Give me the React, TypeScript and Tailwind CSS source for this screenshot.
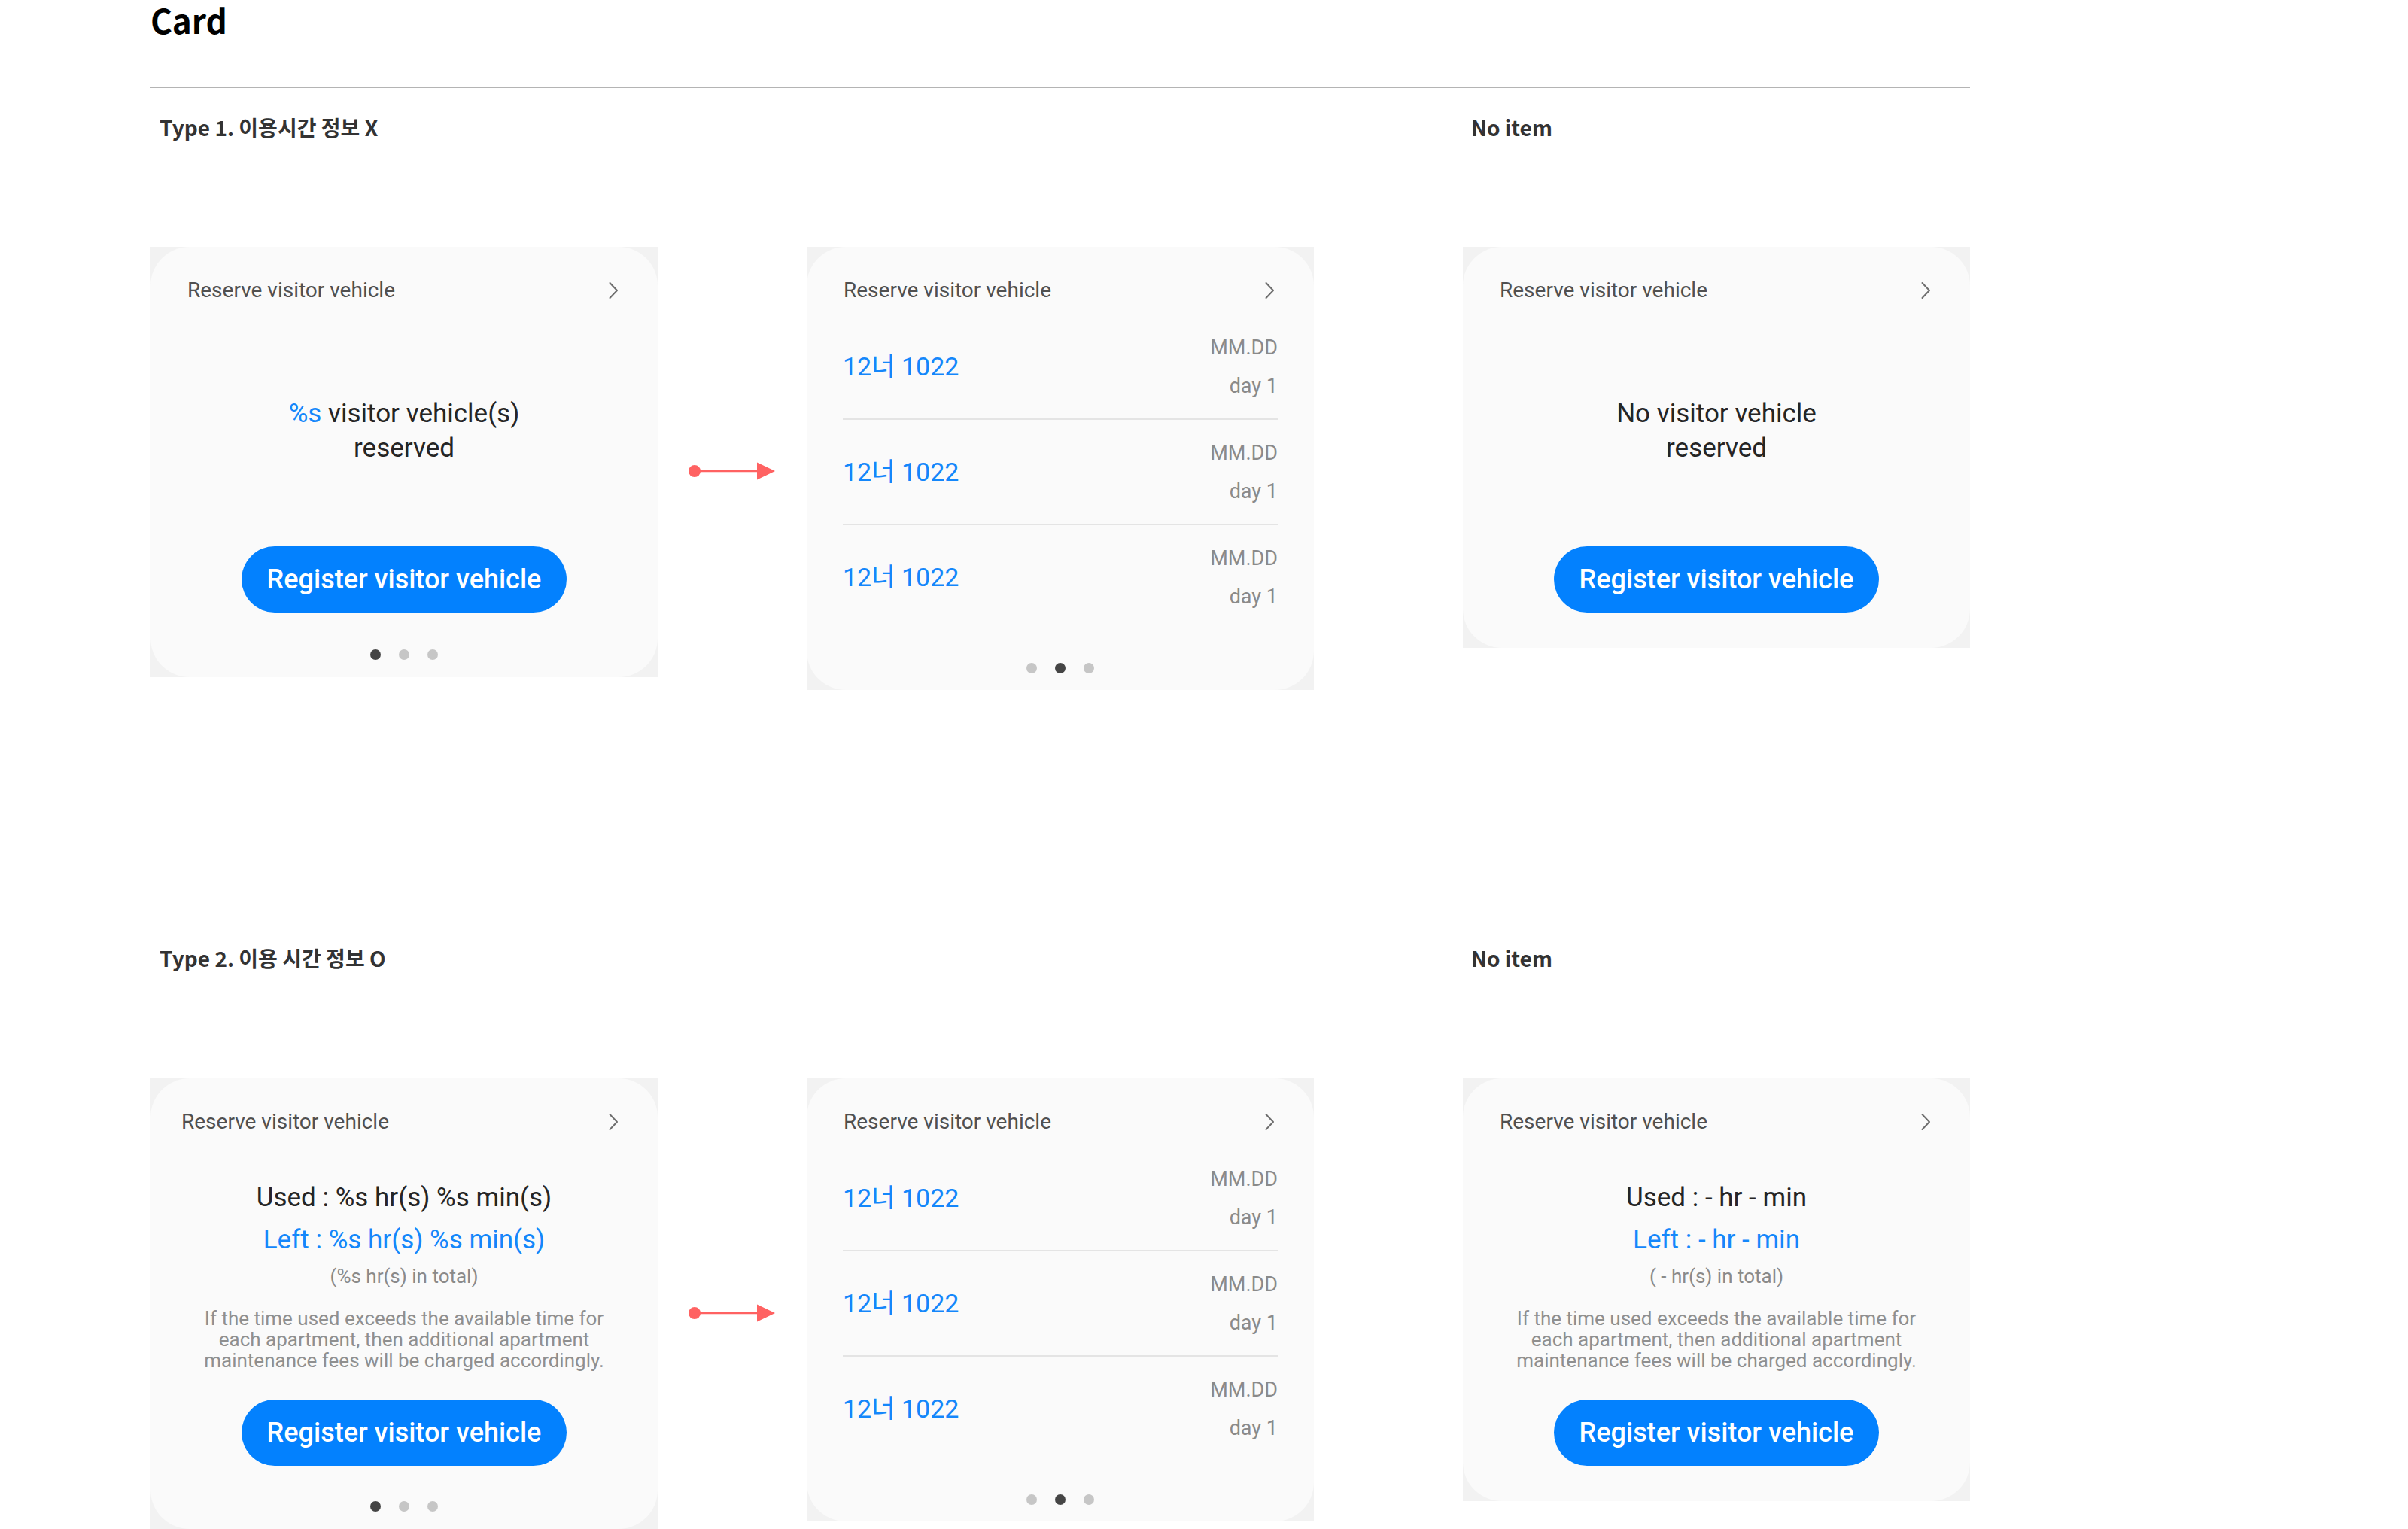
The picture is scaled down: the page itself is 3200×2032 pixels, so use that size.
import React from 'react';

const COLS = 'grid grid-cols-[674px_198px_674px_198px_674px] items-start';

const Chevron: React.FC = () => (
  <svg width="14" height="24" viewBox="0 0 14 24" fill="none">
    <path d="M2.5 2l9.5 10-9.5 10" stroke="#6e6e6e" strokeWidth="2" strokeLinecap="round" strokeLinejoin="round" />
  </svg>
);

const Arrow: React.FC = () => (
  <svg width="116" height="24" viewBox="0 0 116 24">
    <circle cx="8" cy="12" r="8" fill="#ff6262" />
    <line x1="12" y1="12" x2="93" y2="12" stroke="#ff6262" strokeWidth="2.5" />
    <polygon points="91,0.5 115,12 91,23.5" fill="#ff6262" />
  </svg>
);

const Dots: React.FC<{ active: number; className: string }> = ({ active, className }) => (
  <div className={`flex justify-center gap-[24px] ${className}`}>
    {[0, 1, 2].map((i) => (
      <span key={i} className={`w-[14px] h-[14px] rounded-full ${i === active ? 'bg-[#454545]' : 'bg-[#c6c6c6]'}`} />
    ))}
  </div>
);

const CardShell: React.FC<{ children: React.ReactNode }> = ({ children }) => (
  <div className="w-[674px] shrink-0 bg-[#f2f2f2]">
    <div className="flex flex-col rounded-[52px] bg-[#fafafa] font-['Roboto','Noto_Sans_CJK_KR',sans-serif]">
      {children}
    </div>
  </div>
);

const Header: React.FC<{ pl?: string }> = ({ pl = 'pl-[49px]' }) => (
  <div className={`mt-[41px] flex h-[33px] items-center justify-between pr-[52px] ${pl}`}>
    <span className="text-[28px] leading-[33px] text-[#505050]">Reserve visitor vehicle</span>
    <Chevron />
  </div>
);

const RegisterButton: React.FC<{ className: string }> = ({ className }) => (
  <button className={`self-center w-[432px] h-[88px] rounded-full bg-[#0381fe] text-[36px] font-medium text-white ${className}`}>
    Register visitor vehicle
  </button>
);

const SummaryCard: React.FC = () => (
  <CardShell>
    <Header />
    <p className="mt-[125px] text-center text-[35px] leading-[46px] text-[#252525]">
      <span className="text-[#1487fb]">%s</span> visitor vehicle(s)
      <br />
      reserved
    </p>
    <RegisterButton className="mt-[107px]" />
    <Dots active={0} className="mt-[49px] mb-[23px]" />
  </CardShell>
);

const EmptyCard: React.FC = () => (
  <CardShell>
    <Header />
    <p className="mt-[125px] text-center text-[35px] leading-[46px] text-[#252525]">
      No visitor vehicle
      <br />
      reserved
    </p>
    <RegisterButton className="mt-[107px] mb-[47px]" />
  </CardShell>
);

const VehicleRow: React.FC = () => (
  <div className="flex h-[138px] items-center justify-between">
    <span className="text-[34px] leading-[40px] text-[#1487fb]">12너 1022</span>
    <div className="flex flex-col items-end gap-[19px] text-[27px] leading-[32px] text-[#8a8a8a]">
      <span>MM.DD</span>
      <span>day 1</span>
    </div>
  </div>
);

const ListCard: React.FC = () => (
  <CardShell>
    <Header />
    <div className="mt-[16px] flex flex-col px-[48px]">
      <VehicleRow />
      <div className="h-[2px] bg-[#e4e4e4]" />
      <VehicleRow />
      <div className="h-[2px] bg-[#e4e4e4]" />
      <VehicleRow />
    </div>
    <Dots active={1} className="mt-[45px] mb-[22px]" />
  </CardShell>
);

const TimeInfo: React.FC<{ used: string; left: string; total: string }> = ({ used, left, total }) => (
  <div className="flex flex-col items-center text-center">
    <p className="mt-[63px] text-[35px] leading-[44px] text-[#252525]">{used}</p>
    <p className="mt-[12px] text-[35px] leading-[44px] text-[#1487fb]">{left}</p>
    <p className="mt-[9px] text-[26px] leading-[34px] text-[#8a8a8a]">{total}</p>
    <p className="mt-[25px] whitespace-nowrap text-[26px] leading-[28px] text-[#8f8f8f]">
      If the time used exceeds the available time for
      <br />
      each apartment, then additional apartment
      <br />
      maintenance fees will be charged accordingly.
    </p>
  </div>
);

const TimeCard: React.FC = () => (
  <CardShell>
    <Header pl="pl-[41px]" />
    <TimeInfo used="Used : %s hr(s) %s min(s)" left="Left : %s hr(s) %s min(s)" total="(%s hr(s) in total)" />
    <RegisterButton className="mt-[38px]" />
    <Dots active={0} className="mt-[47px] mb-[23px]" />
  </CardShell>
);

const TimeEmptyCard: React.FC = () => (
  <CardShell>
    <Header />
    <TimeInfo used="Used : - hr - min" left="Left : - hr - min" total="( - hr(s) in total)" />
    <RegisterButton className="mt-[38px] mb-[47px]" />
  </CardShell>
);

const SectionLabels: React.FC<{ title: string; className: string }> = ({ title, className }) => (
  <div className={`${COLS} text-[28px] font-bold leading-[40px] text-[#333333] ${className}`}>
    <div className="pl-[12px]">{title}</div>
    <div />
    <div />
    <div />
    <div className="pl-[11px]">No item</div>
  </div>
);

export default function App() {
  return (
    <div className="min-h-screen bg-white pl-[200px] font-['Noto_Sans_CJK_KR','Noto_Sans',sans-serif]">
      <h1 className="text-[44px] font-bold leading-[52px] text-black">Card</h1>
      <div className="mt-[63px] h-[2px] w-[2418px] bg-[#b4b4b4]" />

      <SectionLabels title="Type 1. 이용시간 정보 X" className="mt-[32px]" />
      <div className={`${COLS} mt-[139px]`}>
        <SummaryCard />
        <div className="flex justify-center pt-[286px]">
          <Arrow />
        </div>
        <ListCard />
        <div />
        <EmptyCard />
      </div>

      <SectionLabels title="Type 2. 이용 시간 정보 O" className="mt-[336px]" />
      <div className={`${COLS} mt-[140px]`}>
        <TimeCard />
        <div className="flex justify-center pt-[300px]">
          <Arrow />
        </div>
        <ListCard />
        <div />
        <TimeEmptyCard />
      </div>
    </div>
  );
}
